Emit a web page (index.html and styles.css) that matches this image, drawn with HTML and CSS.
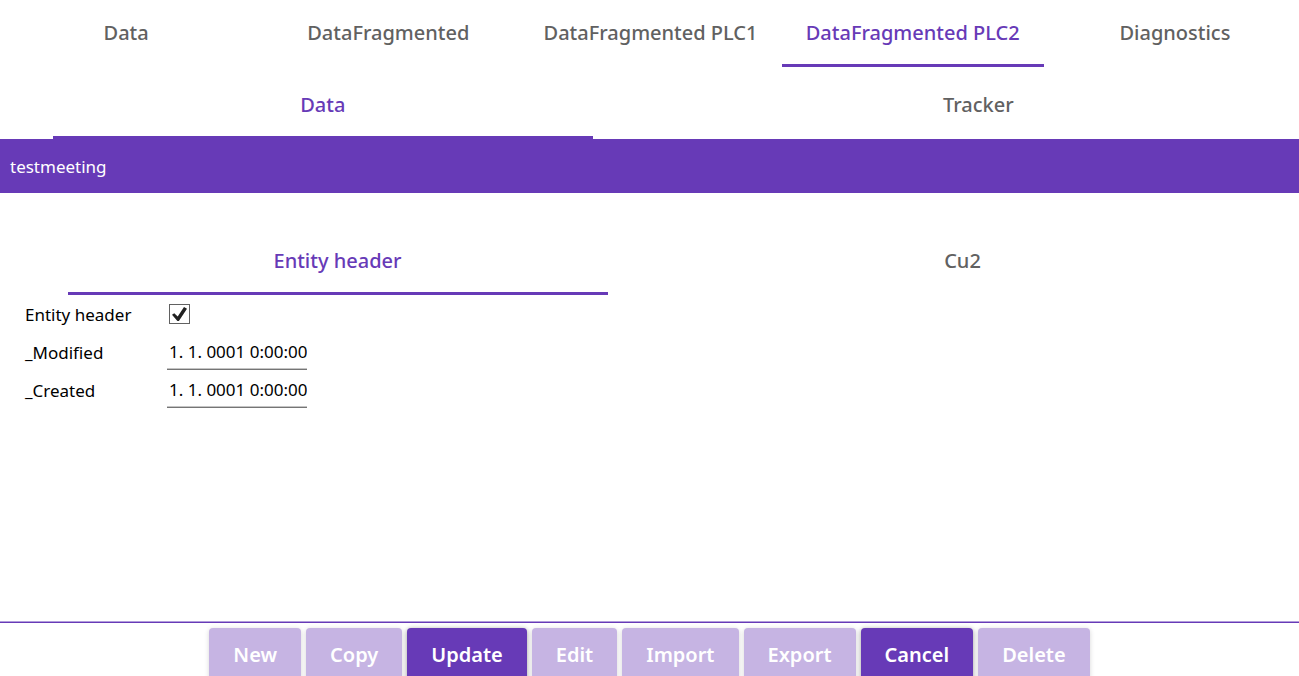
FILE: index.html
```html
<!DOCTYPE html>
<html lang="en">
<head>
<meta charset="utf-8">
<meta name="viewport" content="width=device-width, initial-scale=1">
<title>testmeeting</title>
<link rel="stylesheet" href="styles.css">
</head>
<body>
<div class="app">
  <nav class="tabs tabs-main">
    <button class="tab" type="button">Data</button>
    <button class="tab" type="button">DataFragmented</button>
    <button class="tab" type="button">DataFragmented PLC1</button>
    <button class="tab tab-active" type="button">DataFragmented PLC2</button>
    <button class="tab" type="button">Diagnostics</button>
  </nav>
  <nav class="tabs tabs-view">
    <button class="tab tab-active" type="button">Data</button>
    <button class="tab" type="button">Tracker</button>
  </nav>
  <header class="banner">testmeeting</header>
  <main class="content">
    <nav class="tabs tabs-entity">
      <button class="tab tab-active" type="button">Entity header</button>
      <button class="tab" type="button">Cu2</button>
    </nav>
    <form class="fields">
      <label for="entity-header">Entity header</label>
      <input class="check" id="entity-header" type="checkbox" checked>
      <label for="modified">_Modified</label>
      <input class="text" id="modified" type="text" value="1. 1. 0001 0:00:00">
      <label for="created">_Created</label>
      <input class="text" id="created" type="text" value="1. 1. 0001 0:00:00">
    </form>
  </main>
  <footer class="actions">
    <button class="action" type="button" disabled>New</button>
    <button class="action" type="button" disabled>Copy</button>
    <button class="action" type="button">Update</button>
    <button class="action" type="button" disabled>Edit</button>
    <button class="action" type="button" disabled>Import</button>
    <button class="action" type="button" disabled>Export</button>
    <button class="action" type="button">Cancel</button>
    <button class="action" type="button" disabled>Delete</button>
  </footer>
</div>
</body>
</html>
```
FILE: styles.css
```css
* {
  box-sizing: border-box;
}

body {
  --accent: #673ab7;
  margin: 0;
  height: 100vh;
  overflow: hidden;
  background: #fff;
  color: #000;
  font-family: "Segoe UI", "Noto Sans", "Open Sans", sans-serif;
  font-size: 17px;
}

button,
input {
  font-family: inherit;
}

.app {
  display: flex;
  flex-direction: column;
  height: calc(100vh + 6px);
}

.tabs {
  display: flex;
}

.tabs-main,
.tabs-view {
  margin: 0 -7px 0 -5px;
}

.tab {
  display: flex;
  flex: 1 1 0;
  flex-direction: column;
  align-items: center;
  min-width: 0;
  padding: 22px 0 0;
  border: 0;
  background: none;
  color: #616161;
  font-size: 20px;
  font-weight: 500;
  line-height: 32px;
  white-space: nowrap;
}

.tabs-main .tab {
  padding-top: 17px;
}

.tab::after {
  content: "";
  width: 100%;
  max-width: 540px;
  height: 3px;
  margin-top: 15px;
}

.tab-active {
  color: var(--accent);
}

.tab-active::after {
  background: var(--accent);
}

.banner {
  padding: 16px 10px 14px;
  background: var(--accent);
  color: #fff;
  line-height: 24px;
}

.content {
  flex: 1;
  padding: 30px 24px 0 25px;
}

.fields {
  display: grid;
  grid-template-columns: 142px 140px;
  grid-auto-rows: 38px;
  align-items: center;
}

.check {
  display: grid;
  place-items: center;
  width: 21px;
  height: 20px;
  margin: 0 2px;
  border: 1px solid #616161;
  background: #fff;
  appearance: none;
}

.check:checked::before {
  content: "";
  width: 15px;
  height: 14px;
  background: #212121;
  clip-path: polygon(0 56%, 15% 44%, 38% 68%, 80% 0, 100% 12%, 46% 100%, 36% 100%);
}

.text {
  width: 100%;
  padding: 6px 0 5px 2px;
  border: 0;
  border-bottom: 1px solid #757575;
  background: none;
  box-shadow: inset 0 -1px #c4c4c4;
  color: #000;
  font-size: 17px;
  line-height: 24px;
}

.actions {
  display: flex;
  justify-content: center;
  gap: 5px;
  padding: 6px 0 0;
  border-top: 1px solid #b19ddb;
  box-shadow: inset 0 1px var(--accent);
}

.action {
  padding: 11px 24px;
  border: 0;
  border-radius: 4px;
  background: var(--accent);
  box-shadow: 0 1px 5px rgb(0 0 0 / 40%);
  color: #fff;
  font-size: 20px;
  font-weight: 600;
  line-height: 32px;
}

.action:disabled {
  background: #c6b4e3;
  box-shadow: 0 1px 5px rgb(0 0 0 / 16%);
}
```
